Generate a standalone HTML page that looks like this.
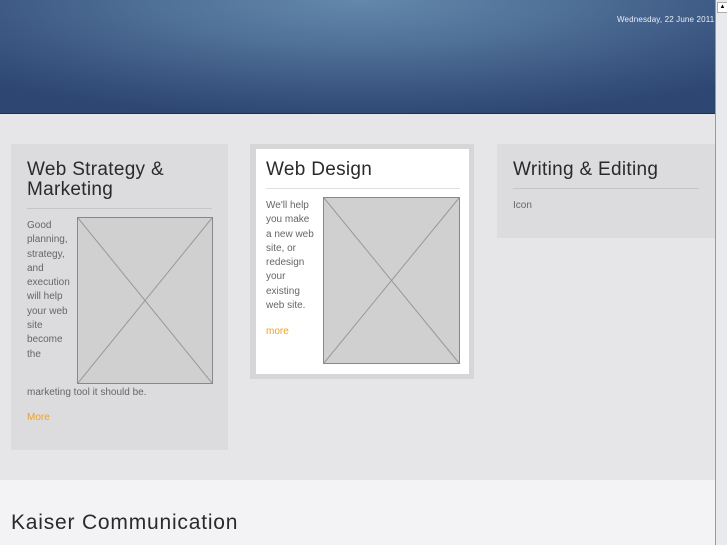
<!DOCTYPE html>
<html><head><style>
body{margin:0;width:727px;height:545px;overflow:hidden;position:relative;background:#e6e6e8;font-family:"Liberation Sans",sans-serif}
.a{position:absolute}
#hdr{left:0;top:0;width:715px;height:113px;background:radial-gradient(ellipse 520px 120px at 360px 0px,#6388aa 0%,#4f7097 40%,#3a5681 75%,#2e4672 100%);border-bottom:1px solid #1e2e4e}
.card{background:#dcdcde}
h2{font-weight:normal;font-size:19px;color:#2a2a2a;margin:0;line-height:20px;letter-spacing:.3px}
.rule{height:1px;background:#c6c6c8}
.t{font-size:10px;color:#666;line-height:14.3px}
.more{font-size:10px;color:#f0a020}
</style></head><body>
<div class="a" id="hdr"></div>
<div class="a" style="left:617px;top:15px;font-size:8px;color:#e8eef5;letter-spacing:.15px">Wednesday, 22 June 2011</div>
<div class="a" style="left:715px;top:0;width:12px;height:545px;background:#e8eaee;border-left:1px solid #999"></div>
<div class="a" style="left:717px;top:2px;width:9px;height:9px;background:#fff;border:1px solid #aaa;font-size:6px;text-align:center;line-height:9px">▲</div>

<div class="a card" style="left:11px;top:144px;width:217px;height:306px"></div>
<h2 class="a" style="left:27px;top:160px">Web Strategy &amp;<br>Marketing</h2>
<div class="a rule" style="left:27px;top:208px;width:185px"></div>
<div class="a t" style="left:27px;top:219px;">Good<br>planning,<br>strategy,<br>and<br>execution<br>will help<br>your web<br>site<br>become<br>the</div>
<svg class="a" style="left:77px;top:217px" width="136" height="167"><rect x=".5" y=".5" width="135" height="166" fill="#d0d0d0" stroke="#888"/><path d="M1 1L135 166M135 1L1 166" stroke="#999" stroke-width="1"/></svg>
<div class="a t" style="left:27px;top:386px">marketing tool it should be.</div>
<div class="a more" style="left:27px;top:412px">More</div>

<div class="a" style="left:250px;top:144px;width:224px;height:235px;background:#d6d6d8"></div>
<div class="a" style="left:256px;top:149px;width:213px;height:225px;background:#fff"></div>
<h2 class="a" style="left:266px;top:160px">Web Design</h2>
<div class="a rule" style="left:266px;top:188px;width:194px;background:#e0e0e0"></div>
<div class="a t" style="left:266px;top:199px;">We'll help<br>you make<br>a new web<br>site, or<br>redesign<br>your<br>existing<br>web site.</div>
<svg class="a" style="left:323px;top:197px" width="137" height="167"><rect x=".5" y=".5" width="136" height="166" fill="#d0d0d0" stroke="#888"/><path d="M1 1L136 166M136 1L1 166" stroke="#999"/></svg>
<div class="a more" style="left:266px;top:326px">more</div>

<div class="a card" style="left:497px;top:144px;width:218px;height:94px"></div>
<h2 class="a" style="left:513px;top:160px">Writing &amp; Editing</h2>
<div class="a rule" style="left:513px;top:188px;width:186px"></div>
<div class="a t" style="left:513px;top:199px">Icon</div>

<div class="a" style="left:0;top:480px;width:715px;height:65px;background:#f3f3f5"></div>
<div class="a" style="left:11px;top:511px;font-size:21px;color:#2a2a2a;letter-spacing:.8px">Kaiser Communication</div>
</body></html>
